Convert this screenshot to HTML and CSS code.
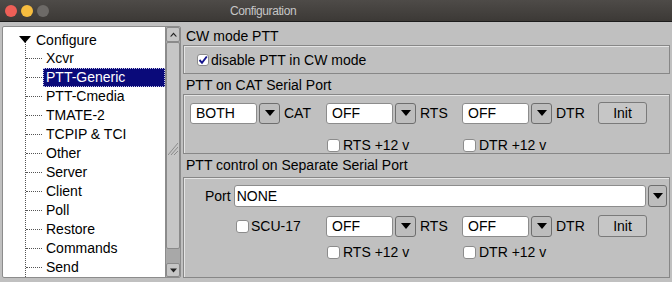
FILE: index.html
```html
<!DOCTYPE html>
<html lang="en">
<head>
    <meta charset="UTF-8">
    <title>Configuration</title>
    <link rel="stylesheet" href="styles.css">
</head>
<body>
<div class="titlebar">
    <div class="lights">
        <span class="light red"></span>
        <span class="light yellow"></span>
        <span class="light gray"></span>
    </div>
    <span class="title">Configuration</span>
</div>
<div class="main">
    <div class="tree">
        <div class="tree-list">
            <div class="tree-root"><span class="arrow-down"></span><span class="root-label">Configure</span></div>
            <div class="tree-children">
                <div class="tree-item"><span class="branch"></span><span class="tree-label">Xcvr</span></div>
                <div class="tree-item"><span class="branch"></span><span class="tree-label selected">PTT-Generic</span></div>
                <div class="tree-item"><span class="branch"></span><span class="tree-label">PTT-Cmedia</span></div>
                <div class="tree-item"><span class="branch"></span><span class="tree-label">TMATE-2</span></div>
                <div class="tree-item"><span class="branch"></span><span class="tree-label">TCPIP &amp; TCI</span></div>
                <div class="tree-item"><span class="branch"></span><span class="tree-label">Other</span></div>
                <div class="tree-item"><span class="branch"></span><span class="tree-label">Server</span></div>
                <div class="tree-item"><span class="branch"></span><span class="tree-label">Client</span></div>
                <div class="tree-item"><span class="branch"></span><span class="tree-label">Poll</span></div>
                <div class="tree-item"><span class="branch"></span><span class="tree-label">Restore</span></div>
                <div class="tree-item"><span class="branch"></span><span class="tree-label">Commands</span></div>
                <div class="tree-item"><span class="branch"></span><span class="tree-label">Send</span></div>
            </div>
        </div>
        <div class="scrollbar">
            <div class="sb-btn up">
                <svg width="7" height="5" viewBox="0 0 7 5"><polygon points="0,4.5 3.5,0.5 7,4.5 5.5,4.5 3.5,2.3 1.5,4.5" fill="#222"/></svg>
            </div>
            <div class="sb-thumb">
                <svg class="grip" width="10" height="18" viewBox="0 0 10 18">
                    <line x1="0" y1="18" x2="10" y2="6" stroke="#8a8a8a"/>
                    <line x1="3" y1="18" x2="10" y2="10" stroke="#8a8a8a"/>
                    <line x1="6" y1="18" x2="10" y2="14" stroke="#8a8a8a"/>
                </svg>
            </div>
            <div class="sb-track"></div>
            <div class="sb-btn down">
                <svg width="7" height="5" viewBox="0 0 7 5"><polygon points="0,0.5 7,0.5 3.5,4.5" fill="#222"/></svg>
            </div>
        </div>
    </div>

    <div class="panel">
        <div class="group-title first">CW mode PTT</div>
        <div class="group-box box-cw">
            <span class="checkbox checked">
                <svg width="10" height="10" viewBox="0 0 10 10"><polyline points="1.5,5 4,7.8 8.8,1.5" fill="none" stroke="#14148c" stroke-width="1.9"/></svg>
            </span>
            <span>disable PTT in CW mode</span>
        </div>

        <div class="group-title">PTT on CAT Serial Port</div>
        <div class="group-box box-cat">
            <div class="row">
                <div class="cell"><span class="combo-input">BOTH</span><span class="drop-btn"></span><span class="cell-label">CAT</span></div>
                <div class="cell"><span class="combo-input">OFF</span><span class="drop-btn"></span><span class="cell-label">RTS</span></div>
                <div class="cell"><span class="combo-input">OFF</span><span class="drop-btn"></span><span class="cell-label">DTR</span></div>
                <span class="btn">Init</span>
            </div>
            <div class="row check-row">
                <div class="cell"></div>
                <div class="cell"><span class="checkbox"></span><span>RTS +12 v</span></div>
                <div class="cell"><span class="checkbox"></span><span>DTR +12 v</span></div>
            </div>
        </div>

        <div class="group-title last">PTT control on Separate Serial Port</div>
        <div class="group-box box-sep">
            <div class="row port-row">
                <span class="port-label">Port</span>
                <span class="port-input">NONE</span>
                <span class="drop-btn port-drop"></span>
            </div>
            <div class="row sep-row">
                <div class="cell"><span class="checkbox scu"></span><span>SCU-17</span></div>
                <div class="cell"><span class="combo-input">OFF</span><span class="drop-btn"></span><span class="cell-label">RTS</span></div>
                <div class="cell"><span class="combo-input">OFF</span><span class="drop-btn"></span><span class="cell-label">DTR</span></div>
                <span class="btn">Init</span>
            </div>
            <div class="row check-row sep-check">
                <div class="cell"></div>
                <div class="cell"><span class="checkbox"></span><span>RTS +12 v</span></div>
                <div class="cell"><span class="checkbox"></span><span>DTR +12 v</span></div>
            </div>
        </div>
    </div>
</div>
</body>
</html>
```

FILE: styles.css
```css
* {
    margin: 0;
    padding: 0;
    box-sizing: border-box;
}

body {
    width: 672px;
    height: 282px;
    overflow: hidden;
    background-color: #c0c0c0;
    font-family: "Liberation Sans", Arial, sans-serif;
    font-size: 14px;
    color: #000;
}

/* title bar */
.titlebar {
    height: 22px;
    display: flex;
    align-items: center;
    padding-left: 5px;
    background: linear-gradient(#4e4b48, #3c3936);
    border-bottom: 1px solid #1c1c1c;
}

.lights {
    display: flex;
    gap: 4px;
}

.light {
    width: 12px;
    height: 12px;
    border-radius: 50%;
}

.red { background-color: #ee5f57; }
.yellow { background-color: #f7bd3f; }
.gray { background-color: #6d6a67; }

.title {
    margin-left: 181px;
    color: #c6c6c6;
    font-size: 12px;
    letter-spacing: -0.4px;
}

.main {
    display: flex;
    height: 260px;
    padding: 4px 2px 4px 2px;
    gap: 2px;
}

/* tree */
.tree {
    width: 179px;
    display: flex;
    background-color: #fff;
    border: 1px solid #8c8c8c;
    border-radius: 2px;
}

.tree-list {
    flex: 1;
    overflow: hidden;
    padding-top: 3px;
}

.tree-root {
    display: flex;
    align-items: center;
    height: 19px;
    padding-left: 16px;
}

.arrow-down {
    width: 0;
    height: 0;
    border-left: 6px solid transparent;
    border-right: 6px solid transparent;
    border-top: 7px solid #000;
}

.root-label {
    margin-left: 5px;
}

.tree-children {
    margin-left: 22px;
    margin-top: -7px;
    padding-top: 7px;
    padding-bottom: 30px;
    border-left: 1px dotted #555;
}

.tree-item {
    display: flex;
    align-items: center;
    height: 19px;
}

.branch {
    width: 16px;
    border-top: 1px dotted #555;
}

.tree-label {
    flex: 1;
    height: 19px;
    line-height: 17px;
    margin-left: 1px;
    padding-left: 2px;
    border: 1px solid transparent;
}

.tree-label.selected {
    background-color: #0a0a7a;
    color: #fff;
    border: 1px dotted #c8c8e8;
}

/* scrollbar */
.scrollbar {
    width: 15px;
    display: flex;
    flex-direction: column;
    background-color: #a8a8a8;
    border-left: 1px solid #8c8c8c;
}

.sb-btn {
    height: 15px;
    display: flex;
    align-items: center;
    justify-content: center;
    background-color: #c6c6c6;
    border: 1px solid #8a8a8a;
    border-radius: 2px;
}

.sb-btn.down {
    height: 14px;
}

.sb-thumb {
    height: 207px;
    display: flex;
    align-items: center;
    justify-content: flex-end;
    background-color: #c6c6c6;
    border: 1px solid #8a8a8a;
    border-radius: 2px;
}

.grip {
    margin-right: 1px;
}

.sb-track {
    flex: 1;
}

/* right side */
.panel {
    width: 487px;
    display: flex;
    flex-direction: column;
}

.group-title {
    height: 20px;
    padding-top: 3px;
    padding-left: 3px;
    line-height: 17px;
}

.group-title.first {
    height: 19px;
    padding-top: 1px;
    line-height: 18px;
}

.group-title.last {
    height: 23px;
}

.group-box {
    border: 1px solid #878787;
    box-shadow: inset 1px 1px 0 #e4e4e4;
}

.box-cw {
    height: 29px;
    display: flex;
    align-items: center;
    padding-left: 13px;
}

.box-cat {
    height: 60px;
    padding: 7px 0 0 6px;
}

.box-sep {
    height: 101px;
    padding: 7px 2px 0 6px;
}

.row {
    display: flex;
    align-items: center;
}

.cell {
    width: 136px;
    flex-shrink: 0;
    display: flex;
    align-items: center;
}

.combo-input {
    width: 67px;
    height: 21px;
    line-height: 19px;
    padding-left: 5px;
    background-color: #fff;
    border: 1px solid #8c8c8c;
    border-radius: 3px;
}

.drop-btn {
    width: 21px;
    height: 21px;
    margin-left: 2px;
    display: flex;
    align-items: center;
    justify-content: center;
    background-color: #bdbdbd;
    border: 1px solid #6e6e6e;
    border-radius: 3px;
}

.drop-btn::after {
    content: "";
    width: 0;
    height: 0;
    border-left: 5px solid transparent;
    border-right: 5px solid transparent;
    border-top: 6px solid #000;
}

.cell-label {
    margin-left: 4px;
}

.btn {
    width: 49px;
    height: 22px;
    line-height: 20px;
    text-align: center;
    background-color: #c6c6c6;
    border: 1px solid #7a7a7a;
    border-radius: 3px;
}

.check-row {
    height: 14px;
    margin-top: 14px;
}

.checkbox {
    width: 13px;
    height: 13px;
    margin-left: 1px;
    margin-right: 3px;
    display: inline-flex;
    align-items: center;
    justify-content: center;
    background-color: #fff;
    border: 1px solid #8c8c8c;
    border-radius: 3px;
}

.checkbox.checked {
    width: 12px;
    height: 12px;
    margin-left: 0;
    margin-right: 2px;
}

.checkbox.scu {
    margin-left: 46px;
    margin-right: 2px;
}

.port-row {
    height: 22px;
}

.port-label {
    margin-left: 15px;
}

.port-input {
    flex: 1;
    height: 22px;
    line-height: 20px;
    margin-left: 3px;
    padding-left: 2px;
    background-color: #fff;
    border: 1px solid #8c8c8c;
    border-radius: 3px;
}

.port-drop {
    width: 19px;
    height: 22px;
}

.sep-row {
    height: 22px;
    margin-top: 8px;
}

.sep-check {
    margin-top: 8px;
}
```
